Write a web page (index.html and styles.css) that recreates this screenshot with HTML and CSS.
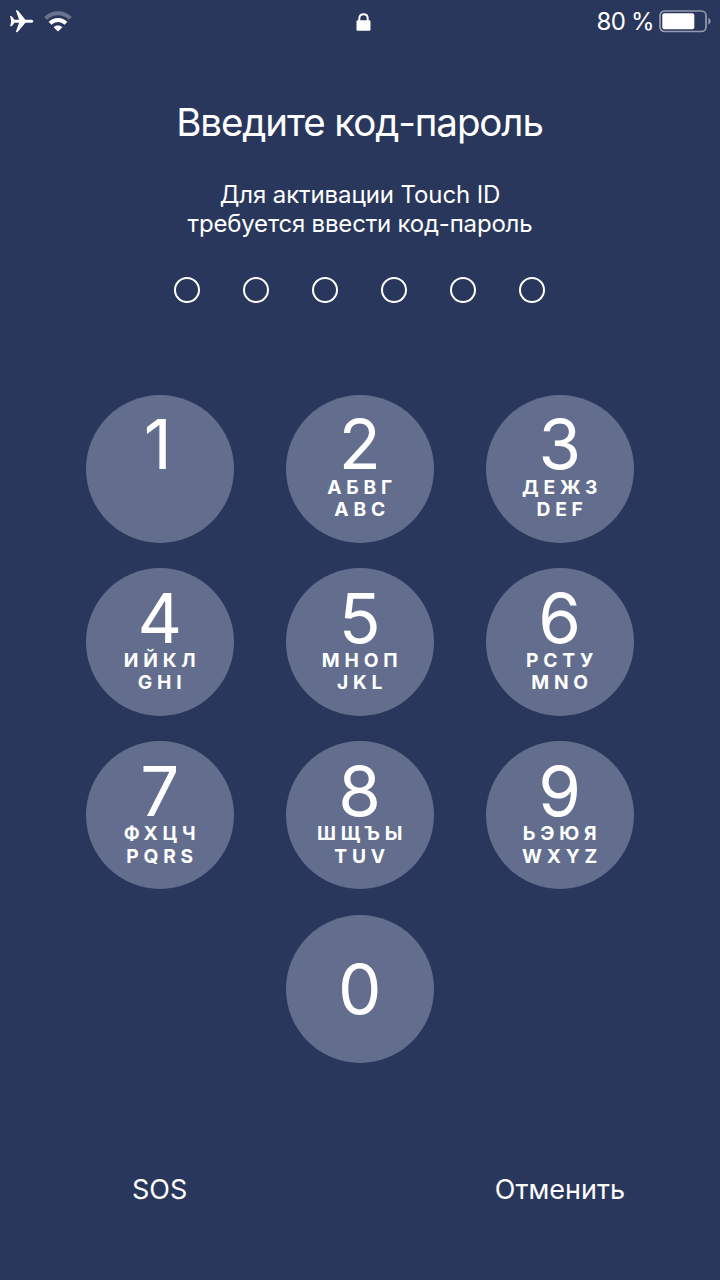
FILE: index.html
```html
<!DOCTYPE html>
<html lang="ru">
<head>
<meta charset="utf-8">
<title>Код-пароль</title>
<link rel="stylesheet" href="styles.css">
</head>
<body>
<main class="screen">
  <header class="status">
    <div class="status-left">
      <svg width="24" height="24" viewBox="0 0 24 24" fill="#fff"><path d="M23.3 11.2C23.3 10.200 22 9.700 20.500 9.700H15.400L8.500 1.300Q7.600 0 5.800 .3L9.100 9.700H4.500L2.200 6.700Q1.300 5.900 .1 6.100L1.200 11.200L.1 16.300Q1.300 16.500 2.200 15.700L4.500 12.700H9.100L5.800 22.100Q7.600 22.400 8.500 21.100L15.400 12.700H20.500C22 12.700 23.300 12.200 23.300 11.200Z"/></svg>
      <svg width="28" height="22" viewBox="0 0 28 22" fill="none" stroke="#fff" stroke-width="4"><path d="M1.600 7.400C8.500 .6 19.500 .6 26.400 7.400" opacity=".3"/><path d="M6 12.300C10.500 7.900 17.500 7.900 22 12.300"/><path d="M14 20.600L9.600 16.300C12 14 16 14 18.400 16.300Z" fill="#fff" stroke="none"/></svg>
    </div>
    <svg class="lock" width="15" height="18" viewBox="0 0 15 18"><path d="M3.300 8V5.500C3.300 2.700 5 1.200 7.500 1.200S11.700 2.700 11.700 5.500V8" fill="none" stroke="#fff" stroke-width="2"/><rect x=".5" y="7.300" width="14" height="10.500" rx="1.300" fill="#fff"/></svg>
    <div class="status-right">
      <span class="percent">80 %</span>
      <svg width="52" height="24" viewBox="0 0 52 24"><rect x="1" y="1" width="46" height="20.500" rx="4.500" fill="none" stroke="#fff" stroke-opacity=".5" stroke-width="1.700"/><rect x="3.300" y="3.300" width="32" height="16" rx="2" fill="#fff"/><path d="M49.300 7.800Q51.600 9 51.600 11.300T49.300 14.800Z" fill="#fff" opacity=".5"/></svg>
    </div>
  </header>

  <h1 class="title">Введите код-пароль</h1>
  <p class="hint"><span class="hint-a">Для активации Touch ID</span><br><span class="hint-b">требуется ввести код-пароль</span></p>
  <div class="dots"><i class="dot"></i><i class="dot"></i><i class="dot"></i><i class="dot"></i><i class="dot"></i><i class="dot"></i></div>

  <section class="keypad">
    <div class="key"><span class="digit digit-one">1</span></div>
    <div class="key"><span class="digit">2</span><span class="letters">АБВГ</span><span class="letters">ABC</span></div>
    <div class="key"><span class="digit">3</span><span class="letters">ДЕЖЗ</span><span class="letters">DEF</span></div>
    <div class="key"><span class="digit">4</span><span class="letters">ИЙКЛ</span><span class="letters">GHI</span></div>
    <div class="key"><span class="digit">5</span><span class="letters">МНОП</span><span class="letters">JKL</span></div>
    <div class="key"><span class="digit">6</span><span class="letters">РСТУ</span><span class="letters">MNO</span></div>
    <div class="key"><span class="digit">7</span><span class="letters">ФХЦЧ</span><span class="letters">PQRS</span></div>
    <div class="key"><span class="digit">8</span><span class="letters">ШЩЪЫ</span><span class="letters">TUV</span></div>
    <div class="key"><span class="digit">9</span><span class="letters">ЬЭЮЯ</span><span class="letters">WXYZ</span></div>
    <div class="key key-zero"><span class="digit">0</span></div>
  </section>

  <footer class="actions"><span class="action">SOS</span><span class="action">Отменить</span></footer>
</main>
</body>
</html>
```
FILE: styles.css
```css
* { box-sizing: border-box; }
body { margin: 0; background: #29375c; }
.screen {
  width: 720px;
  height: 1280px;
  overflow: hidden;
  display: flex;
  flex-direction: column;
  align-items: center;
  color: #fff;
  background: #29375c;
  font-family: Inter, "Noto Sans", sans-serif;
}
.screen svg { display: block; }
.status {
  width: 720px;
  height: 43px;
  padding: 0 9px 0 10px;
  display: grid;
  grid-template-columns: 1fr 15px 1fr;
  align-items: center;
}
.status-left { display: flex; align-items: center; gap: 10px; }
.lock { margin-left: 3px; }
.status-right { display: flex; align-items: center; justify-content: flex-end; gap: 5px; }
.percent { font-size: 24px; line-height: 30px; letter-spacing: -0.7px; }
.title { margin: 56px 1px 0 0; font-size: 38.5px; line-height: 46px; font-weight: 400; letter-spacing: -1.1px; white-space: nowrap; }
.hint { margin: 35px 0 0; font-size: 24px; line-height: 29px; text-align: center; white-space: nowrap; }
.hint-a { letter-spacing: -0.1px; }
.hint-b { letter-spacing: -0.2px; }
.dots { display: flex; gap: 43px; margin: 38.6px 1.5px 0 0; }
.dot { width: 26px; height: 26px; border: 2px solid #fff; border-radius: 50%; }
.keypad {
  margin: 92.1px 0.6px 0 0;
  display: grid;
  grid-template-columns: repeat(3, 148px);
  column-gap: 52px;
  row-gap: 25.3px;
}
.key {
  height: 148px;
  padding-top: 19.6px;
  border-radius: 50%;
  background: #636e8e;
  display: flex;
  flex-direction: column;
  align-items: center;
}
.key-zero { grid-column: 2; padding-top: 44px; }
.digit { font-size: 69px; line-height: 60px; height: 61.4px; }
.digit-one { padding-right: 4px; }
.letters { font-size: 19.2px; line-height: 22.5px; font-weight: 650; letter-spacing: 4.8px; padding-left: 4.8px; }
.actions { width: 720px; margin-top: 110px; padding: 0 95px 0 132px; display: flex; justify-content: space-between; }
.action { font-size: 27px; line-height: 34px; }
```
